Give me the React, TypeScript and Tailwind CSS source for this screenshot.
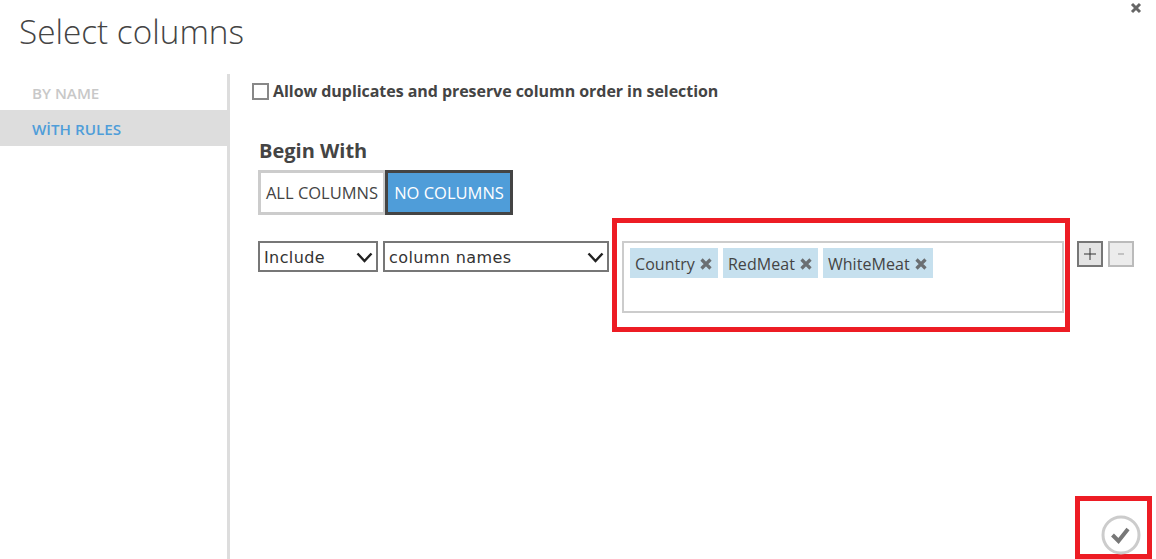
const sansFont = "font-['Open_Sans',sans-serif]";

const columnTags = ["Country", "RedMeat", "WhiteMeat"];

function TagCross() {
  return (
    <svg width="14" height="14" viewBox="0 0 14 14" className="shrink-0">
      <path d="M2.5 2.5 L11.5 11.5 M11.5 2.5 L2.5 11.5" stroke="#6b6f72" strokeWidth="3.2" />
    </svg>
  );
}

function ColumnTag({ label }: { label: string }) {
  return (
    <span className="flex h-[30px] items-center gap-[4px] bg-[#c6e0ee] pl-[5px] pr-[5px] pt-[1px] text-[16px] tracking-[0.05px] text-[#444]">
      {label}
      <TagCross />
    </span>
  );
}

function FakeSelect({ label, width }: { label: string; width: string }) {
  return (
    <div
      className={`flex h-[31px] items-center justify-between border-2 border-[#777] bg-white pl-[4px] pr-[3px] pt-[2px] font-['DejaVu_Sans',sans-serif] text-[16px] tracking-[0.4px] text-[#333] ${width}`}
    >
      <span>{label}</span>
      <svg width="17" height="11" viewBox="0 0 17 11">
        <path d="M1.5 1.5 L8.5 9 L15.5 1.5" fill="none" stroke="#222" strokeWidth="2.4" />
      </svg>
    </div>
  );
}

export default function App() {
  return (
    <div className={`relative h-[559px] w-[1156px] overflow-hidden bg-white ${sansFont}`}>
      <button className="absolute right-[14px] top-[2px] text-[#666]">
        <svg width="12" height="12" viewBox="0 0 12 12" className="block">
          <path d="M2 2 L10 10 M10 2 L2 10" stroke="#666" strokeWidth="3" />
        </svg>
      </button>

      <h1 className="h-[74px] pl-[19px] pt-[7px] text-[33.3px] font-light leading-[49px] text-[#444]">
        Select columns
      </h1>

      <div className="flex h-[485px]">
        <nav className="w-[230px] shrink-0 border-r-[3px] border-[#ddd] text-[15.2px] font-semibold leading-[38px]">
          <div className="h-[36px] pl-[32px] text-[#c8c8c8]">BY NAME</div>
          <div className="mr-[-3px] h-[36px] bg-[#ddd] pl-[32px] text-[#4f9dd9]">WİTH RULES</div>
        </nav>

        <main className="flex-1 pl-[22px]">
          <label className="mt-[6px] flex items-center gap-[4px] text-[16px] font-bold leading-[22px] tracking-[-0.05px] text-[#444]">
            <span className="h-[17px] w-[17px] border-2 border-[#888] bg-white" />
            Allow duplicates and preserve column order in selection
          </label>

          <div className="pl-[6px]">
            <h2 className="mt-[36px] pl-[1px] text-[20px] font-bold leading-[26px] text-[#444]">
              Begin With
            </h2>

            <div className="mt-[6px] flex">
              <button className="h-[45px] w-[128px] border-[3px] border-[#ccc] bg-white pt-[1px] text-[16.5px] text-[#444]">
                ALL COLUMNS
              </button>
              <button className="ml-[-1px] h-[45px] w-[128px] border-[3px] border-[#444] bg-[#4f9dd9] pt-[1px] text-[16.5px] text-white">
                NO COLUMNS
              </button>
            </div>

            <div className="mt-[26px] flex items-start">
              <FakeSelect label="Include" width="w-[120px]" />
              <div className="ml-[5px]">
                <FakeSelect label="column names" width="w-[226px]" />
              </div>
              <div className="ml-[13px] flex h-[72px] w-[442px] flex-wrap content-start gap-[5px] border-2 border-[#ccc] bg-white pl-[6px] pt-[5px]">
                {columnTags.map((tag) => (
                  <ColumnTag key={tag} label={tag} />
                ))}
              </div>
              <div className="ml-[13px] flex gap-[5px]">
                <button className="flex h-[26px] w-[26px] items-center justify-center border-2 border-[#777] bg-[#e4e4e4] text-[#333]">
                  <svg width="14" height="14" viewBox="0 0 14 14">
                    <path d="M7 1 V13 M1 7 H13" stroke="#333" strokeWidth="1" />
                  </svg>
                </button>
                <button className="flex h-[26px] w-[26px] items-center justify-center border-2 border-[#bbb] bg-[#ececec]">
                  <svg width="8" height="8" viewBox="0 0 8 8">
                    <path d="M1 4 H7" stroke="#999" strokeWidth="1" />
                  </svg>
                </button>
              </div>
            </div>
          </div>
        </main>
      </div>

      {/* red annotation frames drawn on top of the dialog */}
      <div className="absolute left-[612px] top-[218px] h-[114px] w-[458px] border-[5px] border-[#ed1c24]" />
      <div className="absolute left-[1075px] top-[496px] h-[63px] w-[77px] border-[5px] border-[#ed1c24]" />

      <svg width="40" height="40" viewBox="0 0 40 40" className="absolute left-[1101px] top-[515px]">
        <circle cx="20" cy="20" r="18" fill="white" stroke="#ccc" strokeWidth="3" />
        <path d="M11.5 20 L17.5 26 L27 14" fill="none" stroke="#777" strokeWidth="4" />
      </svg>
    </div>
  );
}
